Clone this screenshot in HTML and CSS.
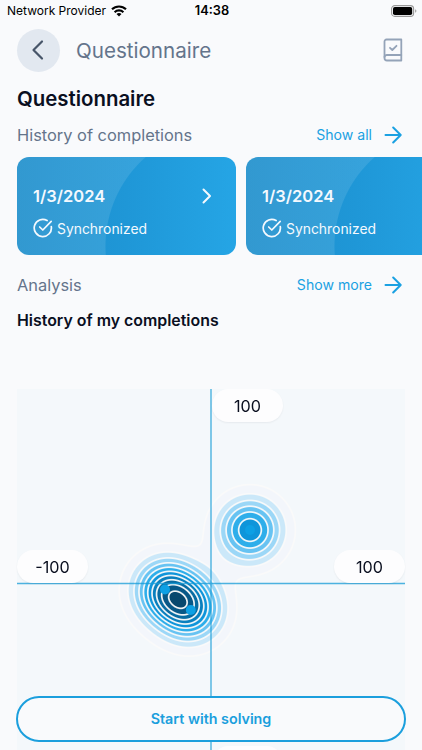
FILE: index.html
```html
<!DOCTYPE html>
<html lang="en">
<head>
    <meta charset="UTF-8">
    <meta name="viewport" content="width=device-width, initial-scale=1.0">
    <title>Questionnaire</title>
    <link rel="stylesheet" href="styles.css">
</head>
<body>
    <div class="status-bar">
        <div class="carrier">
            <span>Network Provider</span>
            <svg width="16" height="12" viewBox="0 0 16 12" fill="none" stroke="#000" stroke-width="2.1">
                <path d="M1 4.3a10 10 0 0 1 14 0"/>
                <path d="M3.6 7.2a6.3 6.3 0 0 1 8.8 0"/>
                <path d="M8 11.6L5.5 9.1a3.6 3.6 0 0 1 5 0z" fill="#000" stroke="none"/>
            </svg>
        </div>
        <span class="clock">14:38</span>
        <svg class="battery" width="26" height="12" viewBox="0 0 26 12">
            <rect x="0.6" y="0.6" width="22" height="10.8" rx="3.2" fill="none" stroke="#999" stroke-width="1.1"/>
            <rect x="2" y="2" width="19.2" height="8" rx="1.8" fill="#000"/>
            <path d="M24.2 4.2v3.6q1.2-.5 1.2-1.8t-1.2-1.8z" fill="#999"/>
        </svg>
    </div>

    <header>
        <button class="back">
            <svg width="24" height="24" viewBox="0 0 24 24" fill="none" stroke="#475569" stroke-width="2.2" stroke-linecap="round" stroke-linejoin="round">
                <path d="M15 3.5L6.5 12l8.5 8.5"/>
            </svg>
        </button>
        <span class="header-title">Questionnaire</span>
        <svg width="20" height="24" viewBox="0 0 20 24" fill="none" stroke="#94a3b8" stroke-width="1.8" stroke-linecap="round" stroke-linejoin="round">
            <path d="M18.3 1.5H3.5A2 2 0 0 0 1.5 3.5V20A2.5 2.5 0 0 0 4 22.5h14.3z"/>
            <path d="M1.5 19A2.5 2.5 0 0 1 4 17h14.3"/>
            <path d="M7 9.8l2.3 2.2 4.2-4.2"/>
        </svg>
    </header>

    <main>
        <h1>Questionnaire</h1>

        <div class="section-row">
            <h2>History of completions</h2>
            <a class="more">Show all
                <svg width="18" height="18" viewBox="0 0 18 18"><path d="M1.5 9h15M9.2 1.5L16.7 9l-7.5 7.5"/></svg>
            </a>
        </div>

        <div class="cards">
            <div class="card">
                <div class="card-top">
                    <span class="date">1/3/2024</span>
                    <svg class="chevron" width="10" height="16" viewBox="0 0 10 16"><path d="M1.5 1.5L8 8l-6.5 6.5"/></svg>
                </div>
                <div class="sync">
                    <svg width="20" height="20" viewBox="0 0 20 20"><path d="M18.3 8.6a8.6 8.6 0 1 1-4.2-6.1"/><path d="M6.7 9l3.1 3 8.4-8.7"/></svg>
                    <span>Synchronized</span>
                </div>
            </div>
            <div class="card">
                <div class="card-top">
                    <span class="date">1/3/2024</span>
                    <svg class="chevron" width="10" height="16" viewBox="0 0 10 16"><path d="M1.5 1.5L8 8l-6.5 6.5"/></svg>
                </div>
                <div class="sync">
                    <svg width="20" height="20" viewBox="0 0 20 20"><path d="M18.3 8.6a8.6 8.6 0 1 1-4.2-6.1"/><path d="M6.7 9l3.1 3 8.4-8.7"/></svg>
                    <span>Synchronized</span>
                </div>
            </div>
        </div>

        <div class="section-row analysis">
            <h2>Analysis</h2>
            <a class="more">Show more
                <svg width="18" height="18" viewBox="0 0 18 18"><path d="M1.5 9h15M9.2 1.5L16.7 9l-7.5 7.5"/></svg>
            </a>
        </div>
        <h3>History of my completions</h3>

        <div class="chart">
            <canvas id="density" width="388" height="388"></canvas>
            <span class="label top">100</span>
            <span class="label left">-100</span>
            <span class="label right">100</span>
            <span class="label bottom">-100</span>
        </div>
    </main>

    <button class="start">Start with solving</button>

    <script src="chart.js"></script>
</body>
</html>
```

FILE: styles.css
```css
* {
    box-sizing: border-box;
}
body {
    font-family: Inter, 'Liberation Sans', sans-serif;
    margin: 0;
    height: 750px;
    position: relative;
    overflow: hidden;
    background-color: #f9fafc;
    color: #0a0f1f;
}
h1, h2, h3 {
    margin: 0;
}
button {
    font-family: inherit;
    padding: 0;
}
.status-bar {
    display: grid;
    grid-template-columns: 1fr auto 1fr;
    align-items: center;
    height: 21px;
    padding: 0 5px 0 7px;
    color: #000;
    font-size: 12px;
}
.carrier {
    display: flex;
    align-items: center;
    gap: 5px;
    white-space: nowrap;
}
.clock {
    font-size: 12.8px;
    font-weight: 600;
}
.battery {
    justify-self: end;
}
header {
    display: flex;
    align-items: center;
    height: 58px;
    padding: 0 19px 0 17px;
}
.back {
    display: flex;
    align-items: center;
    justify-content: center;
    width: 43px;
    height: 43px;
    border: none;
    border-radius: 50%;
    background-color: #e2e8f0;
}
.header-title {
    flex: 1;
    margin-left: 16px;
    font-size: 20.6px;
    color: #64748b;
}
main {
    padding: 0 17px;
}
h1 {
    padding-top: 5px;
    font-size: 20.4px;
    font-weight: 600;
    line-height: 30px;
}
.section-row {
    display: flex;
    align-items: center;
    justify-content: space-between;
    height: 41px;
    margin-bottom: 2px;
}
.section-row h2 {
    font-size: 16.4px;
    font-weight: 400;
    color: #64748b;
}
.more {
    display: flex;
    align-items: center;
    gap: 12px;
    padding-right: 3px;
    font-size: 14.1px;
    color: #1ba1e2;
}
.more svg {
    fill: none;
    stroke: #1ba1e2;
    stroke-width: 2;
    stroke-linecap: round;
    stroke-linejoin: round;
}
.cards {
    display: flex;
    gap: 10px;
    margin-right: -17px;
    overflow: hidden;
}
.card {
    flex: none;
    width: 219px;
    height: 98px;
    padding: 28px 24px 0 16px;
    border-radius: 12px;
    color: #f4f9fe;
    background:
        radial-gradient(circle at 207px 89px, transparent 118px, rgba(255, 255, 255, 0.1) 119px),
        linear-gradient(90deg, #1b8dcb, #1f97d7 50%, #25a5e5);
}
.card svg {
    fill: none;
    stroke: #f4f9fe;
    stroke-width: 1.7;
    stroke-linecap: round;
    stroke-linejoin: round;
}
.card .chevron {
    stroke-width: 2;
}
.card-top {
    display: flex;
    align-items: center;
    justify-content: space-between;
    height: 22px;
}
.date {
    font-size: 16.5px;
    font-weight: 600;
}
.sync {
    display: flex;
    align-items: center;
    gap: 4px;
    height: 20px;
    margin-top: 11px;
    font-size: 13.9px;
}
.sync span {
    padding-top: 1px;
}
.analysis {
    margin-top: 9px;
}
h3 {
    padding-top: 2px;
    font-size: 15.9px;
    font-weight: 600;
    line-height: 24px;
}
.chart {
    position: relative;
    width: 388px;
    height: 388px;
    margin-top: 56px;
}
.chart canvas {
    display: block;
}
.label {
    position: absolute;
    width: 71px;
    height: 33px;
    border-radius: 17px;
    background-color: #fdfdfe;
    box-shadow: 0 1px 2px rgba(15, 23, 42, 0.06);
    font-size: 16.2px;
    line-height: 35px;
    text-align: center;
}
.top {
    top: 0;
    left: 195px;
}
.left {
    top: 161px;
    left: 0;
}
.right {
    top: 161px;
    right: 0;
}
.bottom {
    bottom: -2px;
    left: 195px;
}
.start {
    position: absolute;
    left: 16px;
    right: 16px;
    bottom: 8px;
    height: 46px;
    padding-bottom: 2px;
    border: 2px solid #1b9fdd;
    border-radius: 23px;
    background-color: #f9fafc;
    color: #1b9fdd;
    font-size: 14.3px;
    font-weight: 600;
}
```

FILE: chart.js
```js
const canvas = document.getElementById("density");
const ctx = canvas.getContext("2d");
const size = canvas.width;

// completions, in canvas pixels
const points = [
    { x: 148, y: 200.5 },
    { x: 173.8, y: 221 },
    { x: 233, y: 141 }
];
const peak = 6.75;
const spread = 1080;

// one colour for each density band
const bands = [
    [244, 248, 251], [243, 246, 251], [203, 232, 249], [155, 215, 247],
    [103, 195, 242], [46, 174, 234], [15, 149, 218], [10, 128, 190],
    [8, 108, 162], [8, 88, 135], [8, 72, 110]
];

function density(x, y) {
    let d = 0, gx = 0, gy = 0;
    points.forEach(p => {
        const dx = x - p.x, dy = y - p.y;
        const v = peak * Math.exp(-(dx * dx + dy * dy) / spread);
        d += v;
        gx -= 2 * dx / spread * v;
        gy -= 2 * dy / spread * v;
    });
    return { d, slope: Math.hypot(gx, gy) };
}

const image = ctx.createImageData(size, size);
for (let y = 0; y < size; y++) {
    for (let x = 0; x < size; x++) {
        const { d, slope } = density(x + 0.5, y + 0.5);
        const color = bands[Math.min(Math.floor(d), bands.length - 1)];
        const level = Math.round(d);
        let line = 0;
        if (level > 0) {
            // distance to the nearest contour
            const dist = Math.abs(d - level) / Math.max(slope, 0.001);
            line = Math.max(0, Math.min(1, 1.35 - dist)) * 0.95;
        }
        const i = (y * size + x) * 4;
        for (let c = 0; c < 3; c++) {
            image.data[i + c] = color[c] + (250 - color[c]) * line;
        }
        image.data[i + 3] = 255;
    }
}
ctx.putImageData(image, 0, 0);

ctx.fillStyle = "#0ea0e4";
points.forEach(p => {
    ctx.beginPath();
    ctx.arc(p.x, p.y, 5, 0, Math.PI * 2);
    ctx.fill();
});

ctx.strokeStyle = "rgba(20, 155, 215, 0.75)";
ctx.lineWidth = 1.4;
ctx.beginPath();
ctx.moveTo(194, 0);
ctx.lineTo(194, size);
ctx.moveTo(0, 194.5);
ctx.lineTo(size, 194.5);
ctx.stroke();
```
